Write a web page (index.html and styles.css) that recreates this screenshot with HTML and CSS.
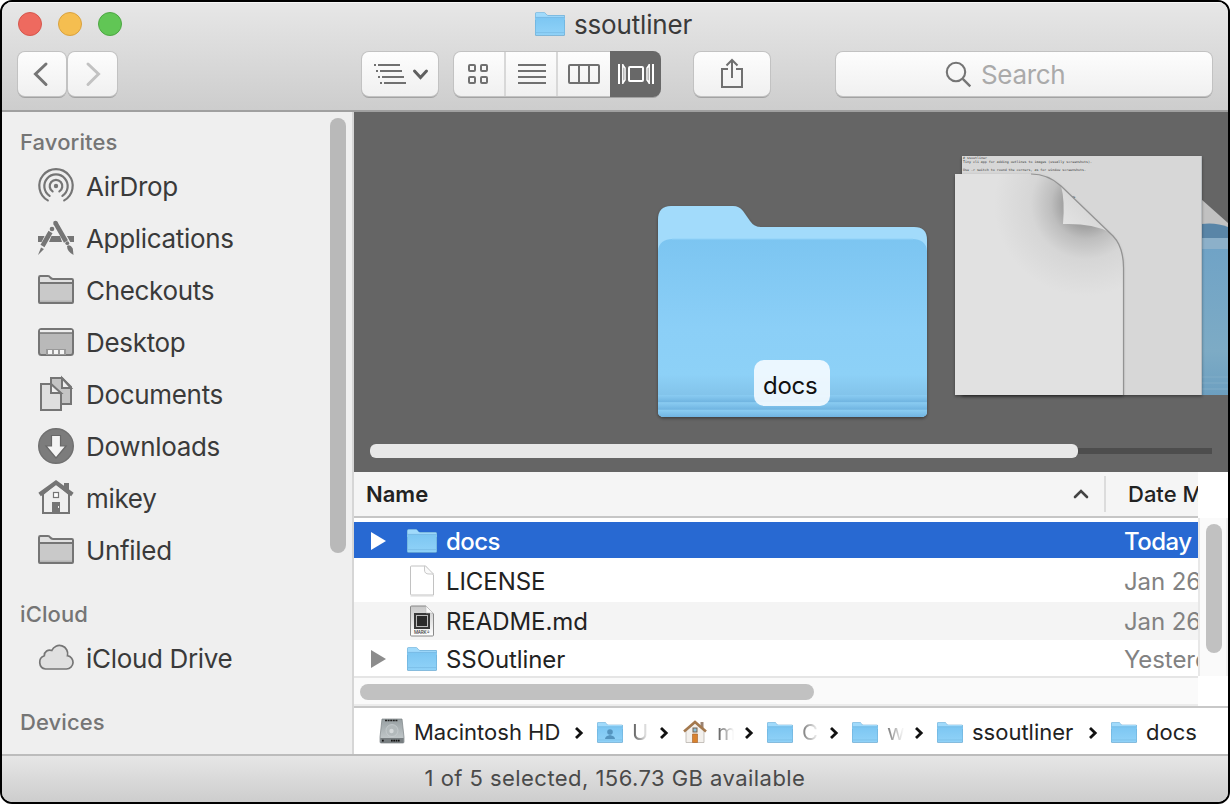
FILE: index.html
```html
<!DOCTYPE html>
<html lang="en">
<head>
<meta charset="utf-8">
<title>ssoutliner</title>
<link rel="stylesheet" href="styles.css">
</head>
<body>
<svg class="defs" aria-hidden="true">
  <defs>
    <linearGradient id="front" x1="0" y1="0" x2="0" y2="1"><stop offset="0" stop-color="#7cc6f2"/><stop offset="1" stop-color="#90d2f8"/></linearGradient>
    <linearGradient id="bigfront" x1="0" y1="0" x2="0" y2="1"><stop offset="0" stop-color="#7cc5f1"/><stop offset=".5" stop-color="#8bcff7"/><stop offset=".76" stop-color="#8dd1f7"/><stop offset=".88" stop-color="#82c3ea"/><stop offset="1" stop-color="#80c2ea"/></linearGradient>
    <linearGradient id="stripe" x1="0" y1="0" x2="0" y2="1"><stop offset="0" stop-color="#8accf2"/><stop offset="1" stop-color="#70b4e1"/></linearGradient>
    <linearGradient id="metal" x1="0" y1="0" x2="0" y2="1"><stop offset="0" stop-color="#98a0a3"/><stop offset="1" stop-color="#c9cfd1"/></linearGradient>
    <linearGradient id="mdpaper" x1="0" y1="0" x2="0" y2="1"><stop offset="0" stop-color="#c8c8c8"/><stop offset="1" stop-color="#fff"/></linearGradient>
    <radialGradient id="curlshade" gradientUnits="userSpaceOnUse" cx="732" cy="92" r="92"><stop offset=".25" stop-color="#a2a2a2"/><stop offset=".38" stop-color="#bebebe"/><stop offset=".6" stop-color="#d6d6d6"/><stop offset="1" stop-color="#e1e1e1"/></radialGradient>
    <linearGradient id="curl" x1="0" y1="1" x2=".6" y2=".4"><stop offset="0" stop-color="#e6e6e6"/><stop offset="1" stop-color="#d6d6d6"/></linearGradient>
    <linearGradient id="dimblue" x1="0" y1="0" x2="0" y2="1"><stop offset="0" stop-color="#70a3c6"/><stop offset=".7" stop-color="#7dabc5"/><stop offset="1" stop-color="#6c9fc0"/></linearGradient>
    <filter id="drop" x="-10%" y="-10%" width="120%" height="125%"><feDropShadow dx="0" dy="1.500" stdDeviation="1.500" flood-color="#000" flood-opacity=".4"/></filter>
  </defs>
  <symbol id="folder" viewBox="0 0 30 24">
    <path d="M0 2Q0 .3 1.6 .3H9Q10.2 .3 11 1.8Q11.7 3 13 3H28.6Q30 3 30 4.4V22.6Q30 23.8 28.8 23.8H1.2Q0 23.8 0 22.6Z" fill="#5b9cc6"/>
    <path d="M.4 2Q.4 .6 1.6 .6H9Q10 .6 10.8 2Q11.6 3.4 13 3.4H28.4Q29.6 3.4 29.6 4.6V8H.4Z" fill="#a0dafb"/>
    <path d="M.4 6.2Q.4 5.2 1.6 5.2H28.4Q29.6 5.2 29.6 6.2V22.2Q29.6 23.2 28.4 23.2H1.6Q.4 23.2 .4 22.2Z" fill="url(#front)"/>
    <path d="M.4 5.4H29.6" stroke="#72b5df" stroke-width=".7"/><path d="M.5 20.6H29.5" stroke="#76b9e2" stroke-width=".7"/>
  </symbol>
  <symbol id="sfolder" viewBox="0 0 36 36">
    <path d="M1 4.4Q1 3 2.4 3H10Q11.4 3 12.2 4.4Q13.2 6 15 6H33.8Q35 6 35 7.2V29Q35 30 34 30H2Q1 30 1 29Z" fill="#e0e0e0" stroke="#757575" stroke-width="2"/>
    <path d="M2 11H34V29H2Z" fill="#c9c9c9"/><path d="M2 27.5H34V29H2Z" fill="#b5b5b5"/>
    <path d="M1 10H35" stroke="#757575" stroke-width="2"/>
  </symbol>
  <symbol id="chev" viewBox="0 0 10 14"><path d="M2 2L7.2 7L2 12" fill="none" stroke="#111" stroke-width="2.8"/></symbol>
</svg>

<div class="window">
  <header class="toolbar">
    <div class="titlebar">
      <div class="lights"><span class="light red"></span><span class="light yellow"></span><span class="light green"></span></div>
      <div class="title"><svg class="folder-icon"><use href="#folder"/></svg><span>ssoutliner</span></div>
    </div>
    <div class="tools">
      <div class="btn back"><svg width="48" height="44"><path d="M28 12L17.500 22L28 32.500" fill="none" stroke="#757575" stroke-width="3" stroke-linecap="round"/></svg></div>
      <div class="btn forward"><svg width="49" height="44"><path d="M20 12L30.500 22L20 32.500" fill="none" stroke="#c2c2c2" stroke-width="3" stroke-linecap="round"/></svg></div>
      <div class="btn arrange"><svg width="76" height="44"><path d="M12 13h2M16 13h22M14 19h2M18 19h22M16 25h2M20 25h22M18 31h2M22 31h22" stroke="#707070" stroke-width="2"/><path d="M52.500 19L58.500 25.500L64.500 19" fill="none" stroke="#606060" stroke-width="3" stroke-linecap="round"/></svg></div>
      <div class="btn views">
        <div class="view icons"><svg width="50" height="44"><g fill="none" stroke="#707070" stroke-width="2"><rect x="15" y="13" width="6" height="6" rx="1"/><rect x="27" y="13" width="6" height="6" rx="1"/><rect x="15" y="25" width="6" height="6" rx="1"/><rect x="27" y="25" width="6" height="6" rx="1"/></g></svg></div>
        <div class="view rows"><svg width="50" height="44"><path d="M12 13h28M12 19h28M12 25h28M12 31h28" stroke="#707070" stroke-width="2"/></svg></div>
        <div class="view cols"><svg width="52" height="44"><g fill="none" stroke="#707070" stroke-width="2"><rect x="11" y="13" width="30" height="18" rx="1"/><path d="M21 13v18M31 13v18"/></g></svg></div>
        <div class="view flow"><svg width="50" height="44"><g fill="none" stroke="#fff" stroke-width="2"><rect x="19" y="15" width="14" height="14" rx="1"/><path d="M9 12v20M43 12v20"/><path d="M12.800 12v20M12.800 13L15 16v12L12.800 31M39.200 12v20M39.200 13L37 16v12L39.200 31" stroke-width="1.500"/></g></svg></div>
      </div>
      <div class="btn share"><svg width="76" height="44"><g fill="none" stroke="#707070" stroke-width="2"><path d="M34 17H28V35H48V17H42"/><path d="M38 26V8M32.500 13.500L38 8L43.500 13.500"/></g></svg></div>
      <div class="btn search"><svg width="28" height="28"><circle cx="11" cy="11" r="9.200" fill="none" stroke="#757575" stroke-width="2.100"/><path d="M17.800 17.800L25.300 25.300" stroke="#757575" stroke-width="2.400"/></svg><span>Search</span></div>
    </div>
  </header>

  <div class="main">
    <nav class="sidebar">
      <div class="places">
        <h2>Favorites</h2>
        <div class="place"><svg class="side-icon" viewBox="0 0 36 36"><g fill="none" stroke="#757575" stroke-width="2.200" stroke-linecap="round"><path d="M9.800 31.400A16.700 16.700 0 1 1 26.200 31.400"/><path d="M11.600 26.900A11.700 11.700 0 1 1 24.400 26.900"/><path d="M14.600 22.400A6.300 6.300 0 1 1 21.400 22.400"/></g><circle cx="18" cy="17" r="2.200" fill="#757575"/></svg><span>AirDrop</span></div>
        <div class="place"><svg class="side-icon" viewBox="0 0 36 36">
          <path d="M0 15H36V21H0Z" fill="#757575"/><path d="M1 35L14 9M17 2L35 34" stroke="#efefef" stroke-width="8"/><path d="M13 15L17 7L22 15Z" fill="#efefef"/><path d="M13.500 15H22L24 21H11Z" fill="#757575"/>
          <path d="M12.500 11L4.500 25M17.500 2.200L28 20.500" stroke="#757575" stroke-width="4.600"/><circle cx="17.500" cy="2" r="2.300" fill="#757575"/><circle cx="14" cy="8" r="2.300" fill="#757575"/><path d="M3 26.500L6 28L0 34ZM28.500 21.500l3.500 2M29 25Q32 22.500 34.800 27.500L35.500 34Q29 30.500 29 25Z" fill="#757575"/><circle cx="29.300" cy="22.200" r="1.900" fill="#757575"/></svg><span>Applications</span></div>
        <div class="place"><svg class="side-icon"><use href="#sfolder"/></svg><span>Checkouts</span></div>
        <div class="place"><svg class="side-icon" viewBox="0 0 36 36"><rect x="1" y="4" width="34" height="26" rx="2.500" fill="#b9b9b9" stroke="#757575" stroke-width="2"/><path d="M2 5H34V8H2Z" fill="#eee"/><path d="M1 8H35" stroke="#757575" stroke-width="1.600"/><path d="M8 30V24H28V30Z" fill="#999"/><path d="M10 25h4v4h-4zM16 25h4v4h-4zM22 25h4v4h-4z" fill="#f5f5f5"/></svg><span>Desktop</span></div>
        <div class="place"><svg class="side-icon" viewBox="0 0 36 36"><g stroke="#757575" stroke-width="2"><path d="M13 1H24L33 10V27H13Z" fill="#c4c4c4"/><path d="M24 1V11H33Z" fill="#efefef"/><path d="M3 7H13L23 17V33H3Z" fill="#dedede"/><path d="M13 7V16H23Z" fill="#efefef"/></g></svg><span>Documents</span></div>
        <div class="place"><svg class="side-icon" viewBox="0 0 36 36"><circle cx="18" cy="17" r="17.300" fill="#7c7c7c" stroke="#707070" stroke-width="1.400"/><path d="M13.500 6.500H22.500V17H28L18 29L8 17H13.500Z" fill="#f4f4f4" stroke="#686868" stroke-width="1.200"/></svg><span>Downloads</span></div>
        <div class="place"><svg class="side-icon" viewBox="0 0 36 36"><path d="M5 13V32H31V13L18 2Z" fill="#efefef" stroke="#757575" stroke-width="2"/><path d="M26 2H31V11L26 7Z" fill="#757575"/><path d="M1.600 13.500L18 1.500L34.400 13.500" fill="none" stroke="#757575" stroke-width="4.200"/><rect x="15.500" y="11.500" width="5" height="5" fill="#fff" stroke="#757575" stroke-width="1.200"/><path d="M14 21H22V32H14Z" fill="#757575"/><path d="M20.500 25v2" stroke="#eee"/></svg><span>mikey</span></div>
        <div class="place"><svg class="side-icon"><use href="#sfolder"/></svg><span>Unfiled</span></div>
        <h2 class="next">iCloud</h2>
        <div class="place"><svg class="side-icon" viewBox="0 0 36 36"><path d="M7.500 28A6.900 6.900 0 0 1 6.300 14.700A5.400 5.400 0 0 1 13.800 9.500A8.300 8.300 0 0 1 29.500 14.700A6.700 6.700 0 0 1 28.500 28Z" fill="#e0e0e0" stroke="#757575" stroke-width="1.700"/></svg><span>iCloud Drive</span></div>
        <h2 class="next">Devices</h2>
      </div>
      <div class="side-scroll"></div>
    </nav>

    <section class="content">
      <div class="coverflow">
        <svg class="covers" width="874" height="320" viewBox="0 0 874 320">
          <g filter="url(#drop)">
            <path d="M304 108Q304 94 317 94H379Q385 94 389 99L396 109Q400 115 407 115H560Q573 115 573 128V299Q573 305 566 305H311Q304 305 304 299Z" fill="#a2dbfb"/>
            <path d="M304 139Q305 127 319 127H558Q572 127 573 139V299Q573 305 566 305H311Q304 305 304 299Z" fill="url(#bigfront)"/>
          </g>
          <path d="M318 127H559" stroke="#91d2f8"/>
          <path d="M304 283H573V290H304Z" fill="url(#stripe)"/><path d="M304 290.500H573V297.500H304Z" fill="url(#stripe)"/><path d="M304 298H573V300Q573 305 566 305H311Q304 305 304 300Z" fill="url(#stripe)"/>
          <path d="M847 87L874 111V116L847 112Z" fill="#c1c1c1"/>
          <path d="M847 112Q862 110 874 115V283H847Z" fill="#5985a7"/>
          <path d="M847 126H874V137H847Z" fill="#8cb0c9"/><path d="M847 137H874V283H847Z" fill="url(#dimblue)"/>
          <path d="M847 265H874M847 271H874M847 277H874" stroke="#80acc7"/>
          <path d="M608 44H848V283H608Z" fill="#d7d7d7" filter="url(#drop)"/><path d="M847.500 44V283" stroke="#b9bdc0"/>
          <g class="preview-text"><text x="609" y="46.500" textLength="24">&#35; ssoutliner</text><text x="609" y="50.500" textLength="129">Tiny cli app for adding outlines to images (usually screenshots).</text><text x="609" y="58.500" textLength="123">Use -r switch to round the corners, as for window screenshots.</text><text x="716" y="85.500" textLength="6">ence.</text></g>
          <path d="M601 62H677Q694 62 707 74L759 124Q769 135 769 156V283H601Z" fill="url(#curlshade)" filter="url(#drop)"/>
          <path d="M707 74L755 120Q738 111 709 112Q711 88 707 74Z" fill="url(#curl)"/>
          <path d="M677 62Q694 62 707 74L759 124Q769.500 135 769.500 156V283" fill="none" stroke="#939393" stroke-width="1.200"/>
        </svg>
        <div class="cover-label">docs</div>
        <div class="cover-scroll"><div class="cover-thumb"></div></div>
      </div>

      <div class="list-area">
        <div class="list">
          <div class="list-head"><span class="col-name">Name</span><svg class="sort" width="16" height="12"><path d="M2 9L8 3L14 9" fill="none" stroke="#444" stroke-width="2.600" stroke-linecap="round"/></svg><span class="col-date">Date Modified</span></div>
          <div class="row selected"><svg class="tri" viewBox="0 0 15 18"><path d="M0 0L15 9L0 18Z" fill="#fff"/></svg><svg class="folder-icon"><use href="#folder"/></svg><span class="name">docs</span><span class="date">Today</span></div>
          <div class="row license"><span class="tri"></span><svg class="file-icon" viewBox="0 0 30 32"><path d="M4.500 1H18.500L26.500 10V30H4.500Q3.500 30 3.500 29V2Q3.500 1 4.500 1Z" fill="#fff" stroke="#c2c2c2"/><path d="M17.500 1V5Q17.500 9 22 9H26.500L18.500 1Z" fill="#fafafa" stroke="#c9c9c9"/><path d="M3.500 31H26.500" stroke="#dadada"/></svg><span class="name">LICENSE</span><span class="date">Jan 26</span></div>
          <div class="row readme"><span class="tri"></span><svg class="file-icon" viewBox="0 0 30 32"><path d="M4.500 1H19L26.500 9V30Q26.500 31 25.500 31H4.500Q3.500 31 3.500 30V2Q3.500 1 4.500 1Z" fill="url(#mdpaper)" stroke="#888"/><path d="M7 8H23V24H7Z" fill="#393939"/><rect x="9.500" y="10.500" width="11" height="11" fill="#2a2a2a" stroke="#bdbdbd"/><path d="M19 1V8H26Z" fill="#fafafa" stroke="#bdbdbd" stroke-width=".6"/><text class="file-type" x="7" y="28.500" textLength="16">MARK↓</text></svg><span class="name">README.md</span><span class="date">Jan 26</span></div>
          <div class="row last"><svg class="tri" viewBox="0 0 15 18"><path d="M0 0L15 9L0 18Z" fill="#8c8c8c"/></svg><svg class="folder-icon"><use href="#folder"/></svg><span class="name">SSOutliner</span><span class="date">Yesterday</span></div>
          <div class="h-scroll"><div class="h-thumb"></div></div>
        </div>
        <div class="v-scroll"><div class="v-track"><div class="v-thumb"></div></div></div>
      </div>

      <div class="pathbar">
        <div class="crumb wide"><svg class="crumb-icon hd" viewBox="0 0 26 26"><path d="M3 1H23L25 19V24Q25 25 24 25H2Q1 25 1 24V19Z" fill="url(#metal)" stroke="#7b8285" stroke-width=".7"/><path d="M1.300 20H24.700V24Q24.700 25 24 25H2Q1.300 25 1.300 24Z" fill="#787e81"/><path d="M6 2.500H19" stroke="#222" stroke-width="1.600" stroke-dasharray="2 .6"/><circle cx="13" cy="12.500" r="6" fill="#b2b9bb" stroke="#cfd4d6" stroke-width=".6"/><circle cx="12.500" cy="13" r="2.200" fill="#d5d9db"/><path d="M3 22.700H5M12 22.700H21" stroke="#111" stroke-width="1.800" stroke-dasharray="1.700 .6"/></svg><span class="label mac">Macintosh HD</span><svg class="chev"><use href="#chev"/></svg></div>
        <div class="crumb"><svg class="crumb-icon" viewBox="0 0 26 21"><use href="#folder" width="26" height="21"/><circle cx="13" cy="10" r="2.800" fill="#5494bf"/><path d="M8 17Q8 14 13 13Q18 14 18 17Z" fill="#5494bf"/></svg><span class="label fade">U</span><svg class="chev"><use href="#chev"/></svg></div>
        <div class="crumb"><svg class="crumb-icon home" viewBox="0 0 26 24"><path d="M4 11V22.500H22V11L13 3Z" fill="#f3f0ec" stroke="#b9b4ae" stroke-width=".8"/><path d="M18.500 2H21.500V9L18.500 6Z" fill="#9b8372"/><path d="M2 11.500L13 2L24 11.500" fill="none" stroke="#a4794e" stroke-width="2.600"/><rect x="11" y="8" width="4" height="4" fill="#8dc2dd" stroke="#77624e"/><path d="M10.500 14H15.500V22.500H10.500Z" fill="#d9822e" stroke="#a55c24" stroke-width=".6"/></svg><span class="label fade">m</span><svg class="chev"><use href="#chev"/></svg></div>
        <div class="crumb"><svg class="crumb-icon"><use href="#folder"/></svg><span class="label fade light-fade">C</span><svg class="chev"><use href="#chev"/></svg></div>
        <div class="crumb"><svg class="crumb-icon"><use href="#folder"/></svg><span class="label fade light-fade">w</span><svg class="chev"><use href="#chev"/></svg></div>
        <div class="crumb mid"><svg class="crumb-icon"><use href="#folder"/></svg><span class="label">ssoutliner</span><svg class="chev"><use href="#chev"/></svg></div>
        <div class="crumb"><svg class="crumb-icon"><use href="#folder"/></svg><span class="label">docs</span></div>
      </div>
    </section>
  </div>
  <footer class="status"><span>1 of 5 selected, 156.73 GB available</span></footer>
</div>
</body>
</html>
```

FILE: styles.css
```css
* { box-sizing: border-box; }
body { margin: 0; background: #fff; font-family: Inter, "Liberation Sans", sans-serif; color: #222; }
svg { display: block; flex: none; overflow: visible; }
.defs { position: absolute; width: 0; height: 0; }
.window { width: 1230px; height: 804px; border: 2px solid #000; border-radius: 12px; overflow: hidden; display: flex; flex-direction: column; background: #fff; }

/* Toolbar */
.toolbar { height: 110px; flex: none; background: linear-gradient(#e7e7e7, #cdcdcd); border-bottom: 2px solid #a0a0a0; box-shadow: inset 0 1px #f6f6f6; }
.titlebar { height: 50px; display: grid; grid-template-columns: 533px auto 1fr; align-items: start; }
.lights { display: flex; gap: 16px; padding: 10px 0 0 16px; }
.light { width: 24px; height: 24px; border-radius: 50%; border: 1px solid; }
.red { background: #ee6a5f; border-color: #d5574d; }
.yellow { background: #f5be50; border-color: #d9a23f; }
.green { background: #61c655; border-color: #4da643; }
.title { display: flex; align-items: center; gap: 9px; height: 44px; font-size: 26px; letter-spacing: -.18px; color: #3a3a3a; }
.title span { padding-top: 1px; }
.folder-icon { width: 30px; height: 24px; }
.tools { display: flex; padding-left: 16px; }
.btn { height: 44px; border-radius: 7px; background: linear-gradient(#fdfdfd, #f0f0f0); box-shadow: 0 0 0 1px #c2c2c2, 0 1.5px 0 .5px #a2a2a2; }
.back { width: 48px; }
.forward { width: 49px; margin-left: 2px; }
.arrange { width: 76px; margin-left: 245px; }
.views { width: 206px; margin-left: 16px; display: flex; }
.view { border-right: 2px solid #d8d8d8; }
.icons, .rows, .cols { width: 52px; }
.cols { border-right: 0; }
.flow { width: 51px; height: 46px; margin: -1px -1px 0 0; padding-top: 1px; border: 0; background: #686868; border-radius: 0 8px 8px 0; }
.share { width: 76px; margin-left: 34px; }
.search { width: 376px; margin-left: 66px; display: flex; align-items: center; padding: 2px 0 0 109px; gap: 8px; color: #aaa; font-size: 26px; letter-spacing: -.35px; }
.search span { padding-bottom: 2px; }

/* Main area */
.main { height: 642px; flex: none; display: flex; }
.sidebar { width: 352px; flex: none; background: #efefef; border-right: 2px solid #d6d6d6; display: flex; justify-content: space-between; padding: 6px 6px 0 0; }
.places { padding-top: 5px; }
h2 { margin: 0; height: 38px; line-height: 38px; padding-left: 18px; font-size: 22px; font-weight: 550; color: #757575; letter-spacing: .1px; }
h2.next { margin-top: 18px; }
.place { height: 52px; display: flex; align-items: center; gap: 12px; padding-left: 36px; font-size: 26px; letter-spacing: -.32px; font-weight: 420; color: #3a3a3a; white-space: nowrap; }
.place span { padding-bottom: 2px; }
.side-icon { width: 36px; height: 36px; }
.side-scroll { width: 16px; height: 435px; border-radius: 8px; background: #b9b9b9; }
.content { width: 874px; display: flex; flex-direction: column; }

/* Cover flow */
.coverflow { position: relative; height: 360px; background: #656565; overflow: hidden; display: flex; flex-direction: column; justify-content: space-between; }
.cover-label { position: absolute; left: 400px; top: 248px; width: 76px; height: 46px; line-height: 51px; padding-left: 9px; border-radius: 10px; background: rgba(245, 251, 255, .9); color: #111; font-size: 24px; letter-spacing: -.25px; }
.cover-scroll { height: 14px; margin: 0 16px 14px; border-radius: 3px; background: linear-gradient(transparent 4px, #4d4d4d 4px, #4d4d4d 10px, transparent 10px); }
.cover-thumb { width: 708px; height: 14px; border-radius: 6px; background: #e8e8e8; }
.preview-text { font: 3.3px "DejaVu Sans Mono", monospace; fill: #333; }

/* File list */
.list-area { height: 234px; display: flex; }
.list { width: 844px; overflow: hidden; }
.list-head { height: 46px; display: flex; align-items: center; background: #f5f5f5; border-bottom: 2px solid #c6c6c6; font-size: 22px; font-weight: 450; white-space: nowrap; padding-left: 12px; }
.col-name { width: 707px; flex: none; color: #222; font-weight: 580; }
.col-date { height: 36px; line-height: 36px; flex: none; margin-left: 15px; padding-left: 22px; border-left: 2px solid #dcdcdc; color: #222; }
.row { display: flex; align-items: center; height: 38px; padding: 2px 0 0 17px; font-size: 24px; font-weight: 420; letter-spacing: -.08px; color: #222; white-space: nowrap; }
.selected { height: 36px; margin-top: 4px; background: #2869d2; color: #fff; font-weight: 520; letter-spacing: -.55px; }
.license { height: 44px; }
.readme { padding-top: 0; background: #f4f4f4; }
.last { height: 36px; }
.tri { width: 15px; height: 18px; flex: none; margin-right: 21px; }
.file-icon { width: 30px; height: 32px; }
.name { width: 678px; margin-left: 9px; flex: none; }
.date { color: #828282; }
.selected .date { color: #fff; }
.h-scroll { height: 30px; padding: 6px; background: #fafafa; border-top: 2px solid #e5e5e5; border-bottom: 2px solid #ececec; }
.h-thumb { width: 454px; height: 16px; border-radius: 8px; background: #c1c1c1; }
.v-scroll { width: 30px; padding-top: 46px; background: #fff; }
.v-track { height: 158px; padding: 6px; background: #fafafa; border-left: 2px solid #e8e8e8; border-right: 2px solid #f0f0f0; }
.v-thumb { width: 16px; height: 129px; border-radius: 8px; background: #c1c1c1; }
.file-type { font: 500 4.5px Inter, sans-serif; fill: #444; }

/* Path bar */
.pathbar { height: 48px; border-top: 2px solid #c8c8c8; display: flex; padding: 2px 0 0 25px; background: #fff; }
.crumb { width: 85px; display: flex; align-items: center; font-size: 22px; font-weight: 430; color: #222; white-space: nowrap; }
.wide { width: 218px; }
.mid { width: 174px; }
.crumb-icon { width: 26px; height: 21px; }
.hd { height: 26px; margin-top: -2px; }
.home { height: 24px; }
.label { margin-left: 9px; }
.fade { width: 18px; overflow: hidden; color: transparent; background: linear-gradient(90deg, #555, #fff 95%); background-clip: text; -webkit-background-clip: text; }
.light-fade { background-image: linear-gradient(90deg, #777, #fff 95%); }
.chev { width: 10px; height: 14px; margin: 1px 13px 0 auto; }

/* Status bar */
.status { height: 48px; border-top: 2px solid #bcbcbc; background: linear-gradient(#e6e6e6, #cdcdcd); text-align: center; line-height: 45px; font-size: 22px; font-weight: 420; letter-spacing: .45px; color: #4a4a4a; white-space: nowrap; }
```
